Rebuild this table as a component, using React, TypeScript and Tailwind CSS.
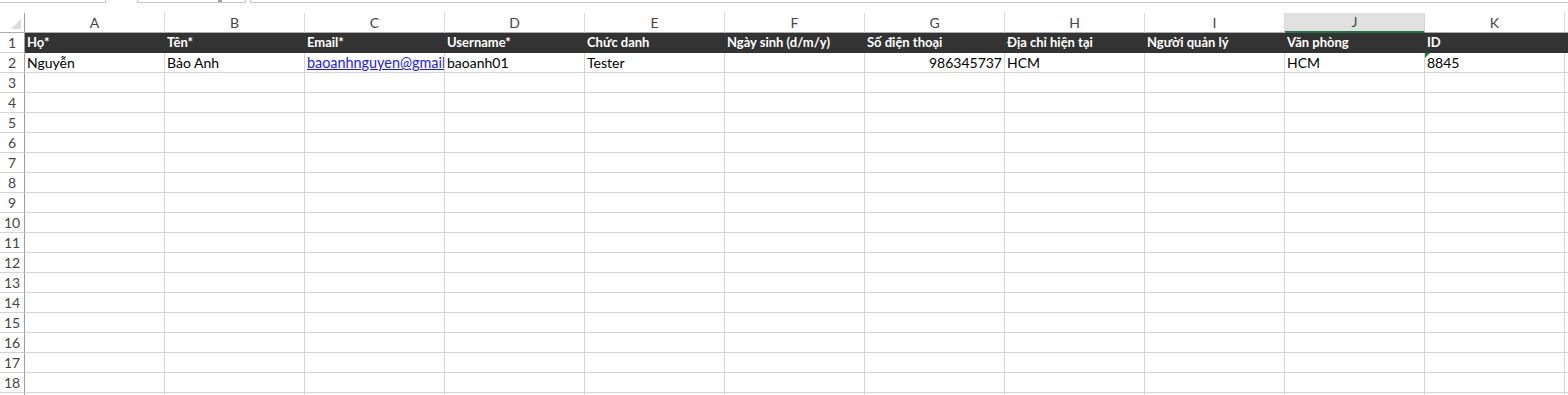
import * as React from 'react';

const cols = ['A', 'B', 'C', 'D', 'E', 'F', 'G', 'H', 'I', 'J', 'K'];

const headers = [
  'Họ*',
  'Tên*',
  'Email*',
  'Username*',
  'Chức danh',
  'Ngày sinh (d/m/y)',
  'Số điện thoại',
  'Địa chỉ hiện tại',
  'Người quản lý',
  'Văn phòng',
  'ID',
];

type Cell = { text?: string; align?: 'left' | 'right'; link?: boolean; flag?: boolean };

const dataRow: Cell[] = [
  { text: 'Nguyễn' },
  { text: 'Bảo Anh' },
  { text: 'baoanhnguyen@gmail.com', link: true },
  { text: 'baoanh01' },
  { text: 'Tester' },
  {},
  { text: '986345737', align: 'right' },
  { text: 'HCM' },
  {},
  { text: 'HCM' },
  { text: '8845', flag: true },
];

const font = { fontFamily: 'Lato, "Liberation Sans", sans-serif' };

function RowNumber({ n }: { n: number }) {
  return (
    <div className="w-[25px] shrink-0 h-[20px] border-r border-b border-r-[#9f9f9f] border-b-[#d4d4d4] text-center text-[14px] leading-[19px] text-[#444]">
      {n}
    </div>
  );
}

function ColumnHeaders() {
  return (
    <div className="flex h-[20px]">
      <div className="w-[25px] shrink-0 border-r border-b border-r-[#9f9f9f] border-b-[#ababab] flex items-end justify-end pr-[3px] pb-[3px]">
        <svg width="10" height="10" viewBox="0 0 10 10">
          <polygon points="10,0 10,10 0,10" fill="#dcdcdc" />
        </svg>
      </div>
      {cols.map((c) =>
        c === 'J' ? (
          <div
            key={c}
            className="w-[140px] shrink-0 bg-[#e1e1e1] border-r border-r-[#d4d4d4] border-b-2 border-b-[#217346] text-center text-[14px] leading-[18px] text-[#1f5c3a]"
          >
            {c}
          </div>
        ) : (
          <div
            key={c}
            className="w-[140px] shrink-0 border-r border-b border-r-[#dadada] border-b-[#ababab] text-center text-[14px] leading-[19px] text-[#444]"
          >
            {c}
          </div>
        )
      )}
      <div className="flex-1 border-b border-b-[#ababab]" />
    </div>
  );
}

function HeaderRow() {
  return (
    <div className="flex h-[20px]">
      <RowNumber n={1} />
      <div className="flex flex-1 bg-[#333333]">
        {headers.map((h) => (
          <div
            key={h}
            className="w-[140px] shrink-0 overflow-hidden whitespace-nowrap pl-[2px] text-[13px] font-bold leading-[19px] text-white"
          >
            {h}
          </div>
        ))}
      </div>
    </div>
  );
}

function DataRow() {
  return (
    <div className="flex h-[20px]">
      <RowNumber n={2} />
      {dataRow.map((c, i) => (
        <div
          key={i}
          className={`relative w-[140px] shrink-0 overflow-hidden whitespace-nowrap border-r border-b border-[#d4d4d4] pl-[2px] text-[14px] leading-[19px] text-black ${
            c.align === 'right' ? 'text-right pr-[2px]' : 'text-left'
          }`}
        >
          {c.flag && (
            <svg className="absolute left-0 top-0" width="5" height="5" viewBox="0 0 5 5">
              <polygon points="0,0 5,0 0,5" fill="#21843f" />
            </svg>
          )}
          {c.link ? (
            <span className="text-[14.4px] text-[#1a1aff] underline decoration-[#1a1aff]">{c.text}</span>
          ) : (
            c.text
          )}
        </div>
      ))}
      <div className="flex-1 border-b border-[#d4d4d4]" />
    </div>
  );
}

function EmptyRow({ n }: { n: number }) {
  return (
    <div className="flex h-[20px]">
      <RowNumber n={n} />
      {cols.map((c) => (
        <div key={c} className="w-[140px] shrink-0 border-r border-b border-[#d4d4d4]" />
      ))}
      <div className="flex-1 border-b border-[#d4d4d4]" />
    </div>
  );
}

export default function App() {
  const rest = Array.from({ length: 17 }, (_, i) => i + 3);
  return (
    <div className="w-[1568px] h-[395px] overflow-hidden bg-white" style={font}>
      {/* formula bar remnants */}
      <div className="flex h-[13px] items-start">
        <div className="w-[106px] h-[3px] border-r border-b border-[#c6c6c6]" />
        <div className="w-[31px]" />
        <div className="relative w-[109px] h-[3px] border-l border-r border-b border-[#c6c6c6]">
          <div className="absolute left-[80px] top-0 w-[4px] h-[2px] bg-[#a0a0a0]" />
        </div>
        <div className="w-[4px]" />
        <div className="flex-1 h-[3px] border-l border-b border-[#c6c6c6]" />
      </div>
      <ColumnHeaders />
      <HeaderRow />
      <DataRow />
      {rest.map((n) => (
        <EmptyRow key={n} n={n} />
      ))}
    </div>
  );
}
